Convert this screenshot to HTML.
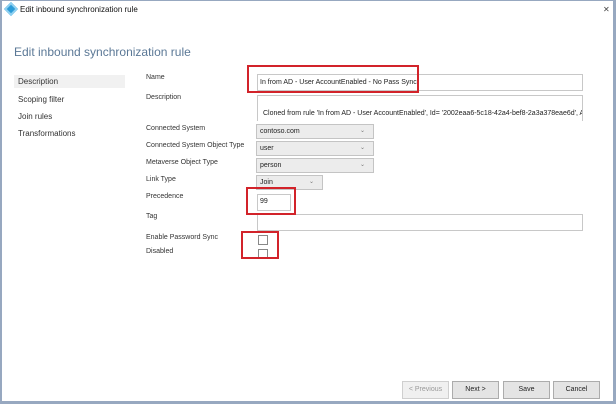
<!DOCTYPE html>
<html><head><style>
*{margin:0;padding:0;box-sizing:border-box}
body{width:616px;height:404px;overflow:hidden;background:#fff;font-family:"Liberation Sans",sans-serif;position:relative;color:#222}
.a{position:absolute;white-space:nowrap}
.l{font-size:7px;color:#333}
.n{font-size:8px;color:#333}
.in{position:absolute;border:1px solid #c8c8c8;background:#fff;font-size:7px;padding-left:5px;color:#222;white-space:nowrap}
.sel{position:absolute;border:1px solid #c4c4c4;background:#ececec;font-size:7px;padding-left:3px;line-height:13px;color:#222}
.sel i{position:absolute;right:8px;top:0;font-style:normal;font-size:6px;color:#777}
.red{position:absolute;border:2px solid #d2232a}
.btn{position:absolute;top:381px;height:18px;width:47px;border:1px solid #acacac;background:#e4e4e4;font-size:7px;text-align:center;line-height:16px;color:#222}
.cb{position:absolute;left:258px;width:10px;height:10px;border:1px solid #888;background:#fff}
</style></head><body>
<div class="a" style="left:0;top:0;width:616px;height:404px;border-left:2px solid #97a8c0;border-right:3px solid #97a8c0;border-bottom:3px solid #97a8c0;border-top:1px solid #97a8c0"></div>
<div class="a" style="left:6px;top:4px;width:10px;height:10px;background:#2a9bd8;transform:rotate(45deg);border:2px solid #8fd0f0"></div>
<div class="a" style="left:20px;top:5px;font-size:8px;color:#111">Edit inbound synchronization rule</div>
<div class="a" style="left:603px;top:5px;font-size:8px;color:#444">✕</div>
<div class="a" style="left:14px;top:45px;font-size:12px;color:#5b7896">Edit inbound synchronization rule</div>
<div class="a" style="left:14px;top:75px;width:111px;height:13px;background:#f1f1f1"></div>
<div class="a n" style="left:18px;top:77px">Description</div>
<div class="a n" style="left:18px;top:95px">Scoping filter</div>
<div class="a n" style="left:18px;top:112px">Join rules</div>
<div class="a n" style="left:18px;top:129px">Transformations</div>
<div class="a l" style="left:146px;top:74px">Name</div>
<div class="a l" style="left:146px;top:94px">Description</div>
<div class="a l" style="left:146px;top:125px">Connected System</div>
<div class="a l" style="left:146px;top:142px">Connected System Object Type</div>
<div class="a l" style="left:146px;top:159px">Metaverse Object Type</div>
<div class="a l" style="left:146px;top:176px">Link Type</div>
<div class="a l" style="left:146px;top:193px">Precedence</div>
<div class="a l" style="left:146px;top:213px">Tag</div>
<div class="a l" style="left:146px;top:234px">Enable Password Sync</div>
<div class="a l" style="left:146px;top:248px">Disabled</div>
<div class="in" style="left:257px;top:74px;width:326px;height:17px;line-height:15px;padding-left:2px">In from AD - User AccountEnabled - No Pass Sync</div>
<div class="in" style="left:257px;top:95px;width:326px;height:26px;border-bottom:none;padding-top:14px;overflow:hidden">Cloned from rule 'In from AD - User AccountEnabled', Id= '2002eaa6-5c18-42a4-bef8-2a3a378eae6d', At</div>
<div class="sel" style="left:256px;top:124px;width:118px;height:15px">contoso.com<i>⌄</i></div>
<div class="sel" style="left:256px;top:141px;width:118px;height:15px">user<i>⌄</i></div>
<div class="sel" style="left:256px;top:158px;width:118px;height:15px">person<i>⌄</i></div>
<div class="sel" style="left:256px;top:175px;width:67px;height:15px">Join<i>⌄</i></div>
<div class="in" style="left:257px;top:194px;width:34px;height:17px;line-height:14px;padding-left:2px">99</div>
<div class="in" style="left:257px;top:214px;width:326px;height:17px"></div>
<div class="cb" style="top:235px"></div>
<div class="cb" style="top:249px"></div>
<div class="red" style="left:247px;top:65px;width:172px;height:28px"></div>
<div class="red" style="left:246px;top:187px;width:50px;height:28px"></div>
<div class="red" style="left:241px;top:231px;width:38px;height:28px"></div>
<div class="btn" style="left:402px;color:#999;background:#f0f0f0;border-color:#cfcfcf">&lt; Previous</div>
<div class="btn" style="left:452px">Next &gt;</div>
<div class="btn" style="left:503px">Save</div>
<div class="btn" style="left:553px">Cancel</div>
</body></html>
